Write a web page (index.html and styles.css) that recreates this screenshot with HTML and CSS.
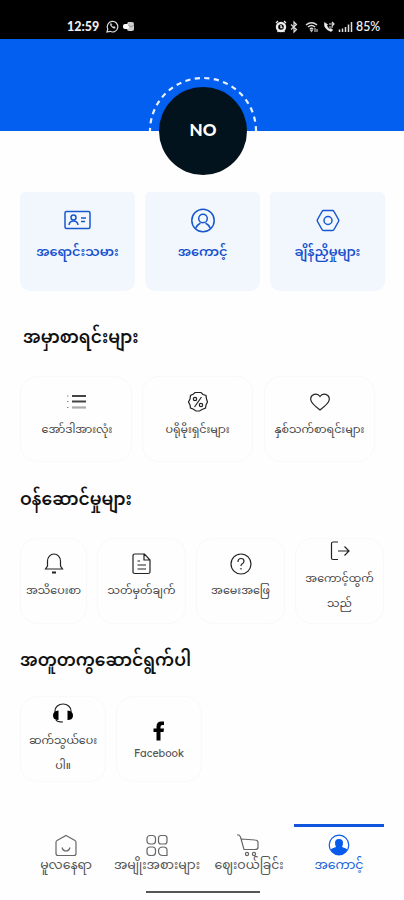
FILE: index.html
```html
<!DOCTYPE html>
<html lang="my">
<head>
<meta charset="utf-8">
<title>အကောင့်</title>
<link rel="stylesheet" href="styles.css">
</head>
<body>
<header class="status">
  <span class="clock">12:59</span>
  <svg class="s-wa" width="13" height="13" viewBox="0 0 13 13"><path d="M1 12l.8-3A5.300 5.300 0 1 1 4 11.300z" fill="none" stroke="#ddd" stroke-width="1.200"/><path d="M4.400 3.700c-1 1.200 2.800 5.600 4.700 4.400l.2-1-1.500-.7-.7.7L5.400 5.500l.5-.8-.6-1.200z" fill="#ddd" stroke="#ddd" stroke-width=".4"/></svg>
  <svg class="s-mail" width="12" height="11" viewBox="0 0 12 11"><path d="M5 1h4q2 0 2 2v5q0 2-2 2H6q-2 0-2-2V3z" fill="#ccc" stroke="none"/><rect y="3" width="6" height="5" rx="2" fill="#fff" stroke="none"/><path d="M5 4l3 2 3-2" stroke="#777" stroke-width=".7"/></svg>
  <svg class="s-alarm" width="12" height="13" viewBox="0 0 12 13"><circle cx="6" cy="7" r="4" fill="none" stroke="#eee" stroke-width="2.400"/><path d="M1 3l2-2M11 3L9 1M2.500 12l1-1M9.500 12l-1-1M6 5v2.500h1.500" stroke="#eee" stroke-width="1.300" fill="none"/></svg>
  <svg class="s-bt" width="8" height="12" viewBox="0 0 8 12"><path d="M1 3.500l5.500 5L4 11V1l2.500 2.500L1 8.500" stroke="#ddd" stroke-width="1.200"/></svg>
  <svg class="s-wifi" width="14" height="12" viewBox="0 0 14 12"><path d="M1 4Q6.500-.5 12 4M3 6q3.500-3 7 0M5 8q1.500-1.500 3 0" stroke="#ddd" stroke-width="1.600"/><path d="M5.500 9h2l-1 1.500zM10 7v4M12 8v3" fill="#ddd" stroke="#bbb"/></svg>
  <svg class="s-call" width="12" height="12" viewBox="0 0 12 12"><path d="M1.500 1.500Q.5 8 8 10.500l1.800-1.500-2-1.500-1 .6Q4.500 7 3.800 4.600l.8-1z" fill="#eee" stroke="#eee" stroke-width=".6"/><path d="M6 3h5M9 1l2 2-2 2M6 6h4" stroke="#ddd"/></svg>
  <svg class="s-sig" width="15" height="12" viewBox="0 0 15 12"><path d="M1.500 8.500V11M4.500 7.500V11M7.500 6V11M10.500 3.500V11M13.500 1V11" stroke="#ddd" stroke-width="1.500"/></svg>
  <span class="battery">85%</span>
</header>
<section class="hero">
  <svg class="ring" width="110" height="56" viewBox="0 0 110 56"><path d="M2 55a53 53 0 0 1 106 0" stroke="#e9f2ff" stroke-width="2.200" stroke-dasharray="5.200 4.400" stroke-dashoffset="2"/></svg>
  <div class="avatar">NO</div>
</section>
<main>
  <div class="tiles">
    <a class="tile"><svg width="28" height="24" viewBox="0 0 28 24"><rect x="1" y="3.500" width="25" height="17" rx="1.500"/><circle cx="9.500" cy="9.500" r="2.500"/><path d="M5 17q.5-4 4.500-4t4.500 4M17 10h5M17 13.500h4"/></svg><span>အရောင်းသမား</span></a>
    <a class="tile"><svg width="26" height="24" viewBox="0 0 26 24"><circle cx="13" cy="12.500" r="11.200"/><circle cx="13" cy="10.500" r="4.300"/><path d="M5.500 20.500q2-4 5-5.500M20.500 20.500q-2-4-5-5.500"/></svg><span>အကောင့်</span></a>
    <a class="tile"><svg width="26" height="24" viewBox="0 0 26 24"><path d="M8.500 2.500h9q1 0 1.500 1l4.500 8q.5 1 0 2l-4.500 8q-.5 1-1.500 1h-9q-1 0-1.500-1l-4.500-8q-.5-1 0-2l4.500-8q.5-1 1.500-1z"/><circle cx="13" cy="12.500" r="4"/></svg><span>ချိန်ညှိမှုများ</span></a>
  </div>

  <h2 class="h-orders">အမှာစာရင်းများ</h2>
  <div class="row orders">
    <a class="card"><svg width="22" height="22" viewBox="0 0 22 22"><path d="M6 5h14M6 10.500h14" stroke="#444" stroke-width="1.800"/><path d="M6 16.500h14" stroke="#aaa" stroke-width="2.200"/><path d="M1 5h1.500M1 10.500h1.500M1 16.500h1.500" stroke="#888"/></svg><span>အော်ဒါအားလုံး</span></a>
    <a class="card"><svg width="22" height="22" viewBox="0 0 22 22"><path d="M8 1.500h6l2 2 3 1 .5 3.500 1 3-1.500 3-.5 3-3.500 1.500-2.500 1.500H9l-3-2-2.500-1L3 14l-1.500-3L3 8l.5-3.500L6.500 3z"/><path d="M14.500 6l-7 10"/><circle cx="8" cy="8" r="1.700"/><circle cx="14" cy="14" r="1.700"/></svg><span>ပရိုမိုးရှင်းများ</span></a>
    <a class="card"><svg width="22" height="22" viewBox="0 0 22 22"><path d="M11 5.500C8 1 1.500 3.500 1.700 8.500 2 12 7 16 11 19c4-3 9-7 9.300-10.500C20.500 3.500 14 1 11 5.500z"/></svg><span>နှစ်သက်စာရင်းများ</span></a>
  </div>

  <h2 class="h-services">ဝန်ဆောင်မှုများ</h2>
  <div class="row services">
    <a class="card"><svg width="20" height="22" viewBox="0 0 20 22"><path d="M3.500 13V8a6.500 7 0 0 1 13 0v5l2 3h-17z"/><path d="M8 19.500h4" stroke-width="2"/></svg><span>အသိပေးစာ</span></a>
    <a class="card"><svg width="20" height="22" viewBox="0 0 20 22"><path d="M3 1h9.500L18 7v12q0 1.500-2 1.500H3q-2 0-2-1.500V3q0-2 2-2zM12 1v6h6M5.500 8H8M5.500 12H14M5.500 16H14"/></svg><span>သတ်မှတ်ချက်</span></a>
    <a class="card"><svg width="22" height="22" viewBox="0 0 22 22"><circle cx="11" cy="11" r="10"/><path d="M8 9q0-3.500 3-3.500t3 2.800Q14 10 12 11q-1 .6-1 2M11 15v1.500"/></svg><span>အမေးအဖြေ</span></a>
    <a class="card tall"><svg width="20" height="20" viewBox="0 0 20 20"><path d="M8 1H3Q1.500 1 1.500 2.500V17q0 1.500 1.500 1.500h5M8 10h11M14.500 5.500L19 10l-4.500 4.500"/></svg><span>အကောင့်ထွက်<br>သည်</span></a>
  </div>

  <h2 class="h-join">အတူတကွဆောင်ရွက်ပါ</h2>
  <div class="row join">
    <a class="card tall"><svg width="22" height="20" viewBox="0 0 22 20"><path d="M3 9V8a8 7 0 0 1 16 0v1M4 17q1 2 7 2" stroke-width="1.200"/><path d="M6.500 7.500V17Q1 17 1 12.500t5.500-5zM15.500 7.500V17q5.500 0 5.500-4.500t-5.500-5z" fill="#000" stroke="none"/></svg><span>ဆက်သွယ်ပေး<br>ပါ။</span></a>
    <a class="card fb"><svg width="14" height="20" viewBox="0 0 14 20"><path d="M4.500 19.500V11H1.500V7.500h3V5.500q0-5 5-5H12V4h-1.500Q8.500 4 8.500 6v1.500H12L11.500 11h-3v8.500z" fill="#000" stroke="none"/></svg><span>Facebook</span></a>
  </div>
</main>
<nav class="nav">
  <a class="n1"><svg width="24" height="24" viewBox="0 0 24 24"><path d="M12 1.500l9 5q1 .5 1 2v11q0 2-2 2H4q-2 0-2-2v-11q0-1.500 1-2zM8 13.500Q9 17 12 17t4-3.500"/></svg><span>မူလနေရာ</span></a>
  <a class="n2"><svg width="24" height="24" viewBox="0 0 24 24"><rect x="2" y="1.500" width="8.500" height="8.500" rx="3"/><rect x="13.500" y="1.500" width="8.500" height="8.500" rx="2.500"/><rect x="2" y="13" width="8.500" height="8.500" rx="3"/><path d="M13.500 17q0-4 4.500-4t4 4v4.500h-4q-4.500 0-4.500-4.500z"/></svg><span>အမျိုးအစားများ</span></a>
  <a class="n3"><svg width="26" height="24" viewBox="0 0 26 24"><path d="M1 1h2l1.500 2L8 15.500H19q3 0 3-2V8.500Q22 6 19 6L5.500 5"/><circle cx="11" cy="20" r="1.600"/><circle cx="18" cy="20" r="1.600"/></svg><span>ဈေးဝယ်ခြင်း</span></a>
  <a class="n4"><svg width="22" height="24" viewBox="0 0 22 24"><circle cx="11" cy="11" r="9.800"/><path d="M11 5q4 0 4 4 0 2-1 4 4 1 5.500 2.500-3 5.500-8.500 5.500t-8.500-5.500Q4 14 8 13q-1-2-1-4 0-4 4-4z" fill="#075bea" stroke="none"/></svg><span>အကောင့်</span></a>
</nav>
<div class="gesture"></div>
</body>
</html>
```
FILE: styles.css
```css
* { box-sizing: border-box; }
body { margin: 0; width: 404px; height: 900px; overflow: hidden; background: #fefefe; color: #111; font-family: "Noto Sans", "Noto Sans Myanmar", "Padauk", sans-serif; }
svg { display: block; flex: none; fill: none; stroke: #222; stroke-width: 1.2; overflow: visible; }
.status { height: 39px; padding: 14px 0 0 67px; background: #000; color: #eee; display: flex; align-items: center; font: 600 12px/24px Lato, sans-serif; }
.clock { width: 39px; font-size: 12.5px; font-weight: 900; }
.status svg { stroke: none; }
.s-mail { margin-left: 4px; }
.s-alarm { margin-left: 140px; }
.s-bt { margin-left: 3px; }
.s-wifi { margin-left: 7px; }
.s-call { margin-left: 4px; }
.s-sig { margin-left: 3px; }
.battery { margin-left: 3px; font-size: 12.3px; }
.hero { position: relative; height: 92px; background: #035ff0; }
.ring { position: absolute; left: 148px; top: 37px; }
.avatar { position: absolute; left: 159px; top: 48px; width: 88px; height: 88px; border-radius: 50%; background: #02131d; color: #fff; font: 900 17px/86px Lato, sans-serif; text-align: center; }
main { height: 684px; padding-top: 61px; }
.tiles { display: flex; gap: 10px; padding-left: 20px; }
.tile { width: 115px; height: 99px; padding-top: 16px; border-radius: 5px 5px 10px 10px; background: #f2f7fe; display: flex; flex-direction: column; align-items: center; color: #1550cc; font-size: 12.9px; font-weight: 600; line-height: 20px; white-space: nowrap; }
.tile svg { stroke: #1858ce; stroke-width: 1.5; }
.tile span { margin-top: 9px; }
h2 { margin: 0 0 0 20px; font-size: 17.1px; line-height: 26px; height: 26px; font-weight: 600; white-space: nowrap; }
.h-orders { margin: 33px 0 0 23px; }
.h-services { margin-top: 24px; }
.h-join { margin-top: 23px; }
.row { display: flex; padding-left: 20px; }
.card { height: 86px; border: 1px solid #f9f9f9; border-radius: 17px; display: flex; flex-direction: column; align-items: center; font-size: 11.1px; line-height: 20px; text-align: center; white-space: nowrap; color: #444; }
.card svg { margin-top: 14px; }
.card span { margin-top: 5px; }
.orders { gap: 11px; margin-top: 26px; }
.orders .card { width: 111px; }
.orders .card:first-child { width: 112px; padding-left: 2px; margin-right: -1px; }
.orders .card span { margin-top: 6px; }
.services { gap: 10px; margin-top: 26px; }
.services .card { width: 89px; }
.services .card:first-child { width: 67px; }
.card.tall { line-height: 25px; }
.card.tall svg { margin-top: 2px; }
.card.tall span { margin-top: 4px; }
.join { gap: 10px; margin-top: 23px; }
.join .card { width: 86px; }
.join .tall svg { margin-top: 6px; }
.card.fb svg { margin-top: 24px; }
.card.fb span { margin-top: 2px; font: 10.5px/20px Lexend, "DejaVu Sans", sans-serif; color: #555; }
.nav { height: 76px; display: flex; padding-left: 22px; }
.nav a { display: flex; flex-direction: column; align-items: center; padding-top: 16px; border-top: 3px solid transparent; font-size: 12.5px; line-height: 20px; color: #555; white-space: nowrap; }
.nav span { margin-top: -3px; }
.nav svg { stroke: #666; }
.n1 { width: 88px; }
.n2 { width: 94px; }
.n3 { width: 90px; }
.nav .n4 { width: 90px; margin-top: 9px; padding-top: 7px; border-color: #1155df; color: #1762dc; }
.nav .n4 svg { stroke: #075bea; }
.gesture { width: 114px; height: 2px; background: #555; margin-left: 146px; }
```
